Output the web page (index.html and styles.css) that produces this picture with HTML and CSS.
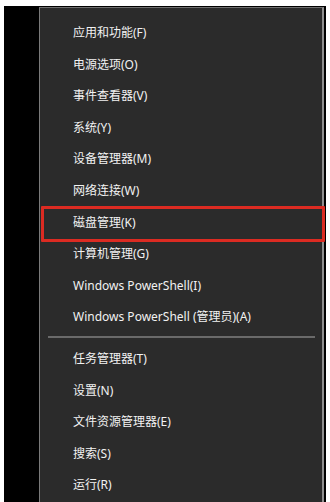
FILE: index.html
```html
<!DOCTYPE html>
<html lang="zh-CN">
<head>
    <meta charset="UTF-8">
    <meta name="viewport" content="width=device-width, initial-scale=1.0">
    <title>Win+X 菜单</title>
    <link rel="stylesheet" href="styles.css">
</head>
<body>
    <div class="desktop">
        <div class="menu">
            <ul class="menu-group">
                <li class="menu-item">应用和功能(F)</li>
                <li class="menu-item">电源选项(O)</li>
                <li class="menu-item">事件查看器(V)</li>
                <li class="menu-item">系统(Y)</li>
                <li class="menu-item">设备管理器(M)</li>
                <li class="menu-item">网络连接(W)</li>
                <li class="menu-item marked">磁盘管理(K)</li>
                <li class="menu-item">计算机管理(G)</li>
                <li class="menu-item">Windows PowerShell(I)</li>
                <li class="menu-item">Windows PowerShell (管理员)(A)</li>
            </ul>
            <div class="separator"></div>
            <ul class="menu-group">
                <li class="menu-item">任务管理器(T)</li>
                <li class="menu-item">设置(N)</li>
                <li class="menu-item">文件资源管理器(E)</li>
                <li class="menu-item">搜索(S)</li>
                <li class="menu-item">运行(R)</li>
            </ul>
        </div>
    </div>
</body>
</html>
```
FILE: styles.css
```css
body, html {
    margin: 0;
    padding: 0;
    background: #fff;
    font-family: "Noto Sans", "Noto Sans CJK SC", sans-serif;
}

.desktop {
    display: flex;
    height: 496px;
    margin: 6px 4px 0;
    padding: 1px 2px 0 35px;
    background: #000;
    overflow: hidden;
}

.menu {
    flex: 1;
    background: #2b2b2b;
    border-top: 1px solid #6e6e6e;
    border-left: 1px solid #7a7a7a;
    border-right: 2px solid #8e8e8e;
    padding-top: 9px;
}

.menu-group {
    list-style: none;
    margin: 0;
    padding: 0;
}

.menu-item {
    position: relative;
    height: 31.6px;
    line-height: 31.6px;
    padding-left: 33px;
    font-size: 12px;
    color: #f2f2f2;
    white-space: nowrap;
}

/* red annotation box around the highlighted entry */
.menu-item.marked::after {
    content: "";
    position: absolute;
    left: 1px;
    right: -3px;
    top: -1px;
    bottom: -4px;
    border: 3px solid #dc2b22;
    border-radius: 1px;
}

.separator {
    height: 2px;
    margin: 3px 7px 5px 8px;
    background: #6a6a6a;
}
```
